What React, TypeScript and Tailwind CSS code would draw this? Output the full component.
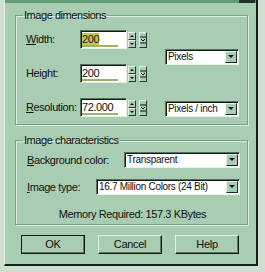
const font = { fontFamily: '"Liberation Sans", Arial, sans-serif' }

function Sunken({ className, children }: { className: string; children?: React.ReactNode }) {
  return (
    <div
      className={`relative flex items-center bg-white border border-t-[#55705c] border-l-[#55705c] border-b-[#e6f1e8] border-r-[#e6f1e8] shadow-[inset_1px_1px_0_#111a13] ${className}`}
    >
      {children}
    </div>
  )
}

function ArrowBtn() {
  return (
    <div className="ml-auto mr-[1px] w-[12px] h-[12px] bg-[#a9cdb2] border border-t-[#e4f1e6] border-l-[#e4f1e6] border-b-[#1d2a20] border-r-[#1d2a20] flex items-center justify-center">
      <svg width="6" height="4" viewBox="0 0 6 4">
        <path d="M0 0h6L3 3z" fill="#111" />
      </svg>
    </div>
  )
}

function Dropdown({ label, w }: { label: string; w: string }) {
  return (
    <Sunken className={`h-[16px] ${w}`}>
      <span className="pl-[2px] text-[10px] tracking-[-0.3px] text-[#111] leading-none">{label}</span>
      <ArrowBtn />
    </Sunken>
  )
}

function Spin() {
  return (
    <div className="flex items-start">
      <div className="flex flex-col w-[8px] ml-[1px] mt-[1px]">
        {["M0 3h4L2 1z", "M0 1h4L2 3z"].map((d, i) => (
          <div
            key={i}
            className="h-[8px] bg-[#a9cdb2] border border-t-[#e4f1e6] border-l-[#e4f1e6] border-b-[#2a3a2d] border-r-[#2a3a2d] flex items-center justify-center"
          >
            <svg width="4" height="4" viewBox="0 0 4 4">
              <path d={d} fill="#111" />
            </svg>
          </div>
        ))}
      </div>
      <div className="ml-[3px] mt-[1px] w-[8px] h-[16px] bg-[#a9cdb2] border border-t-[#e4f1e6] border-l-[#e4f1e6] border-b-[#2a3a2d] border-r-[#2a3a2d] flex items-center justify-center">
        <svg width="6" height="8" viewBox="0 0 6 8">
          <path d="M0 1h6M1 3l2 2 2-2M0 7h6" stroke="#111" fill="none" strokeWidth="1" />
        </svg>
      </div>
    </div>
  )
}

function NumField({ label, u, rest, value, selected }: { label: string; u?: string; rest: string; value: string; selected?: boolean }) {
  return (
    <div className="flex items-center h-[18px]">
      <div className="w-[54px] text-[11px] tracking-[-0.4px] text-[#111]">
        {u ? <span className="underline">{u}</span> : null}
        {rest}
      </div>
      <Sunken className="w-[47px] h-[19px]">
        <span
          className={`ml-[1px] text-[11px] tracking-[-0.4px] leading-[12px] ${selected ? "bg-[#c6c44e] text-[#1a1a10]" : "text-[#111]"}`}
        >
          {value}
        </span>
        <div className="absolute left-[1px] bottom-[1px] h-[2px] w-[36px] bg-[#9db26a]" />
      </Sunken>
      <Spin />
    </div>
  )
}

function Group({ title, children, className }: { title: string; children: React.ReactNode; className: string }) {
  return (
    <fieldset
      className={`ml-[10px] w-[233px] border border-[#7aa285] shadow-[1px_1px_0_#dbece0,inset_1px_1px_0_#dbece0] ${className}`}
    >
      <legend className="ml-[7px] px-[1px] text-[11px] leading-[12px] tracking-[-0.45px] text-[#111]">{title}</legend>
      {children}
    </fieldset>
  )
}

function Button({ label, isDefault }: { label: string; isDefault?: boolean }) {
  return (
    <div
      className={`w-[64px] h-[19px] flex items-center justify-center text-[11px] tracking-[-0.3px] text-[#111] bg-[#a9cdb2] border ${
        isDefault ? "border-[#0e1710]" : "border-t-[#e4f1e6] border-l-[#e4f1e6] border-b-[#0e1710] border-r-[#0e1710]"
      } shadow-[inset_-1px_-1px_0_#5d7c65]`}
    >
      {label}
    </div>
  )
}

export default function App() {
  return (
    <div className="w-[265px] h-[272px] bg-[#cde0cf] overflow-hidden" style={font}>
      <div className="ml-[4px] w-[254px] h-[266px] bg-[#a9cdb2] border-l border-l-[#e2efe4] border-r-2 border-r-[#16211a] border-b-2 border-b-[#16211a] flex flex-col">
        <div className="h-[3px] bg-[#5f9c71] flex justify-end">
          <div className="w-[16px] h-[3px] bg-[#22332a] mr-[1px]" />
        </div>

        <Group title="Image dimensions" className="mt-[6px] pb-[7px]">
          <div className="flex pt-[9px] pl-[10px]">
            <div className="flex flex-col gap-[16px]">
              <NumField u="W" rest="idth:" value="200" selected />
              <NumField rest="Height:" value="200" />
              <NumField u="R" rest="esolution:" value="72.000" />
            </div>
            <div className="flex flex-col ml-[18px] pt-[19px] gap-[36px]">
              <Dropdown label="Pixels" w="w-[74px]" />
              <Dropdown label="Pixels / inch" w="w-[74px]" />
            </div>
          </div>
        </Group>

        <Group title="Image characteristics" className="mt-[9px] pb-[4px]">
          <div className="flex flex-col pt-[6px] pl-[11px] pr-[7px] text-[11px] tracking-[-0.4px] text-[#111]">
            <div className="flex items-center justify-between">
              <span>
                <span className="underline">B</span>ackground color:
              </span>
              <Dropdown label="Transparent" w="w-[116px]" />
            </div>
            <div className="flex items-center justify-between mt-[10px]">
              <span>
                <span className="underline">I</span>mage type:
              </span>
              <Dropdown label="16.7 Million Colors (24 Bit)" w="w-[144px]" />
            </div>
            <div className="mt-[13px] text-center leading-[12px] pr-[2px]">Memory Required: 157.3 KBytes</div>
          </div>
        </Group>

        <div className="flex gap-[13px] ml-[16px] mt-[10px]">
          <Button label="OK" isDefault />
          <Button label="Cancel" />
          <Button label="Help" />
        </div>
      </div>
    </div>
  )
}
